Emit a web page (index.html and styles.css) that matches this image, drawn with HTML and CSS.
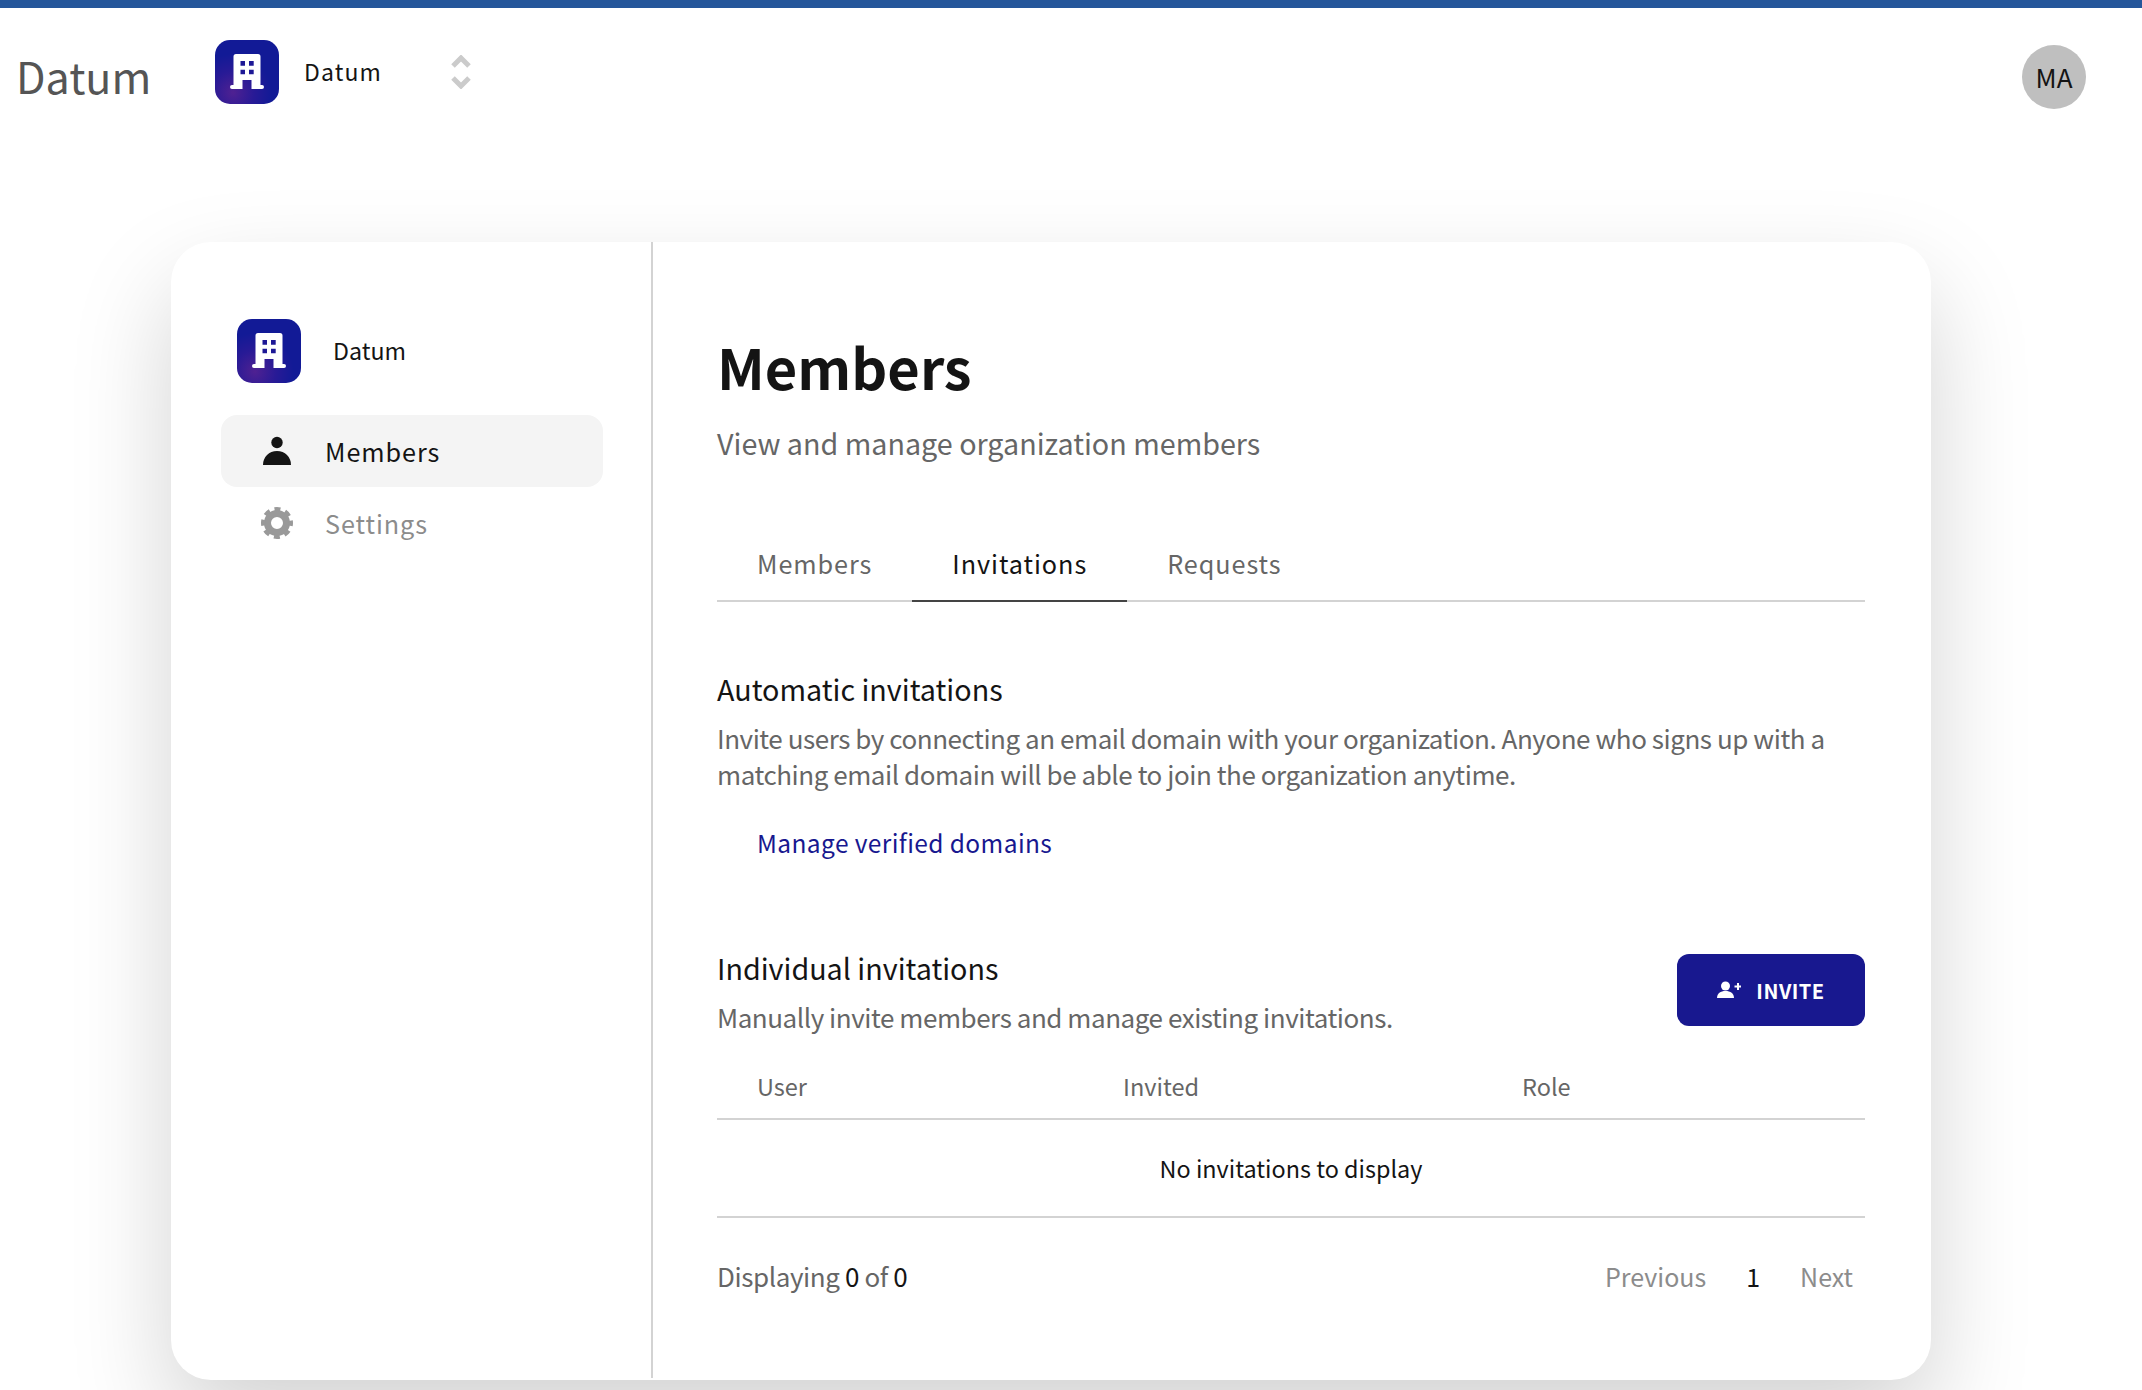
FILE: index.html
```html
<!DOCTYPE html>
<html lang="en">
<head>
    <meta charset="UTF-8">
    <title>Datum - Members</title>
    <link rel="stylesheet" href="styles.css">
</head>
<body>
    <header class="topbar">
        <div class="brand">Datum</div>
        <div class="org-switch">
            <svg class="org-logo" viewBox="0 0 64 64">
                <defs>
                    <radialGradient id="logoGlow" cx="28%" cy="82%" r="60%">
                        <stop offset="0" stop-color="#4f2192"/>
                        <stop offset="0.55" stop-color="#281a96"/>
                        <stop offset="1" stop-color="#121a96"/>
                    </radialGradient>
                </defs>
                <rect width="64" height="64" rx="15" fill="url(#logoGlow)"/>
                <path d="M21 14h22a2.500 2.500 0 0 1 2.500 2.500V45h1.500a2 2 0 0 1 0 4H36.500V40h-9v9H17a2 2 0 0 1 0-4h1.500V16.500A2.500 2.500 0 0 1 21 14z" fill="#fff"/>
                <path d="M25.500 21h4.500v4.700h-4.500zM34 21h4.700v4.700H34zM25.500 29.700h4.500v4.600h-4.500zM34 29.700h4.700v4.600H34z" fill="#1d1896"/>
            </svg>
            <span class="org-name">Datum</span>
            <svg class="chevrons" viewBox="0 0 20 34">
                <path d="M2 11l8-8 8 8M2 23l8 8 8-8" fill="none" stroke="#cbcbcb" stroke-width="5"/>
            </svg>
        </div>
        <div class="avatar">MA</div>
    </header>

    <main class="card">
        <aside class="sidebar">
            <div class="side-org">
                <svg class="org-logo" viewBox="0 0 64 64">
                    <rect width="64" height="64" rx="15" fill="url(#logoGlow)"/>
                    <path d="M21 14h22a2.500 2.500 0 0 1 2.500 2.500V45h1.500a2 2 0 0 1 0 4H36.500V40h-9v9H17a2 2 0 0 1 0-4h1.500V16.500A2.500 2.500 0 0 1 21 14z" fill="#fff"/>
                    <path d="M25.500 21h4.500v4.700h-4.500zM34 21h4.700v4.700H34zM25.500 29.700h4.500v4.600h-4.500zM34 29.700h4.700v4.600H34z" fill="#1d1896"/>
                </svg>
                <span class="side-org-name">Datum</span>
            </div>
            <nav class="side-nav">
                <a class="nav-item active">
                    <svg class="nav-icon" viewBox="0 0 32 32">
                        <circle cx="16" cy="7.500" r="5.700" fill="#141414"/>
                        <path d="M2 30c0-8 6-14 14-14s14 6 14 14z" fill="#141414"/>
                    </svg>
                    Members
                </a>
                <a class="nav-item">
                    <svg class="nav-icon" viewBox="0 0 32 32">
                        <circle cx="16" cy="16" r="9.500" fill="none" stroke="#999" stroke-width="7"/>
                        <circle cx="16" cy="16" r="14" fill="none" stroke="#999" stroke-width="4" stroke-dasharray="6 5" stroke-dashoffset="3"/>
                    </svg>
                    Settings
                </a>
            </nav>
        </aside>

        <section class="content">
            <h1>Members</h1>
            <p class="subtitle">View and manage organization members</p>

            <div class="tabs">
                <a class="tab">Members</a>
                <a class="tab current">Invitations</a>
                <a class="tab">Requests</a>
            </div>

            <h2 class="auto-title">Automatic invitations</h2>
            <p class="desc">Invite users by connecting an email domain with your organization. Anyone who signs up with a matching email domain will be able to join the organization anytime.</p>
            <a class="link">Manage verified domains</a>

            <div class="section-head">
                <div>
                    <h2>Individual invitations</h2>
                    <p class="desc">Manually invite members and manage existing invitations.</p>
                </div>
                <button class="invite-btn">
                    <svg class="invite-icon" viewBox="0 0 24 18">
                        <circle cx="8.500" cy="5" r="4.500" fill="#fff"/>
                        <path d="M0 17c0-4.500 3.500-7 8.500-7s8.500 2.500 8.500 7z" fill="#fff"/>
                        <path d="M17.500 4.500h2.500V2h2v2.500h2v2h-2V9h-2V6.500h-2.500z" fill="#fff"/>
                    </svg>
                    INVITE
                </button>
            </div>

            <div class="table-head">
                <span>User</span>
                <span>Invited</span>
                <span>Role</span>
            </div>
            <div class="table-empty">No invitations to display</div>

            <div class="table-foot">
                <span class="count">Displaying <b>0</b> of <b>0</b></span>
                <div class="pager">
                    <a>Previous</a>
                    <a class="page-num">1</a>
                    <a>Next</a>
                </div>
            </div>
        </section>
    </main>
</body>
</html>
```

FILE: styles.css
```css
:root {
    --navy: #18188f;
    --line: #d3d3d3;
    --text-dark: #141414;
    --text-mid: #666;
    --text-soft: #8c8c8c;
}

html, body {
    margin: 0;
    height: 1390px;
    overflow: hidden;
}

body {
    background: #fff;
    border-top: 8px solid #25569a;
    box-sizing: border-box;
    font-family: "Noto Sans CJK SC", "Noto Sans", sans-serif;
    color: var(--text-dark);
}

/* top bar */
.topbar {
    display: flex;
    align-items: flex-start;
    height: 234px;
    padding: 32px 56px 0 16px;
    box-sizing: border-box;
}

.brand {
    width: 199px;
    font-size: 43px;
    line-height: 64px;
    margin-top: 3px;
    color: #555;
}

.org-switch {
    display: flex;
    align-items: center;
}

.org-logo {
    width: 64px;
    height: 64px;
    flex: none;
}

.org-name {
    width: 147px;
    margin-left: 25px;
    margin-top: -2px;
    font-size: 23px;
    letter-spacing: 1.100px;
}

.chevrons {
    width: 20px;
    height: 34px;
}

.avatar {
    width: 64px;
    height: 64px;
    margin: 5px 0 0 auto;
    border-radius: 50%;
    background: #bfbfbf;
    font-size: 26px;
    line-height: 64px;
    text-align: center;
}

/* card */
.card {
    display: flex;
    width: 1760px;
    height: 1138px;
    margin-left: 171px;
    background: #fff;
    border-radius: 40px;
    box-shadow: 0 45px 100px rgba(0, 0, 0, 0.175);
}

.sidebar {
    width: 480px;
    height: 1136px;
    flex: none;
    border-right: 2px solid var(--line);
    box-sizing: content-box;
}

.side-org {
    display: flex;
    align-items: center;
    padding: 77px 0 0 66px;
}

.side-org-name {
    margin-left: 32px;
    margin-top: -2px;
    font-size: 23.200px;
}

.side-nav {
    margin: 32px 0 0 50px;
    width: 382px;
}

.nav-item {
    display: flex;
    align-items: center;
    height: 72px;
    padding-left: 40px;
    border-radius: 16px;
    font-size: 25.200px;
    letter-spacing: 0.950px;
    color: var(--text-soft);
}

.nav-item.active {
    background: #f4f4f4;
    color: var(--text-dark);
}

.nav-icon {
    width: 32px;
    height: 32px;
    margin-right: 32px;
}

.content {
    flex: 1;
    padding: 86px 66px 0 64px;
}

h1 {
    margin: 0;
    font-size: 56px;
    line-height: 76px;
    font-weight: 700;
}

.subtitle {
    margin: 17px 0 0;
    font-size: 28.700px;
    line-height: 44px;
    color: var(--text-mid);
}

/* tabs */
.tabs {
    display: flex;
    margin-top: 65px;
    border-bottom: 2px solid var(--line);
}

.tab {
    padding: 0 40px;
    height: 70px;
    line-height: 67px;
    margin-bottom: -2px;
    font-size: 25.200px;
    letter-spacing: 0.950px;
    color: var(--text-mid);
}

.tab.current {
    color: var(--text-dark);
    border-bottom: 2px solid #444;
}

h2 {
    margin: 0;
    font-size: 28.700px;
    line-height: 44px;
    font-weight: 400;
    color: var(--text-dark);
}

.auto-title {
    margin-top: 65px;
}

.desc {
    margin: 9px 0 0;
    font-size: 26px;
    letter-spacing: -0.450px;
    line-height: 35.500px;
    color: var(--text-mid);
}

.link {
    display: block;
    margin: 34px 0 0 40px;
    font-size: 24.500px;
    line-height: 36px;
    letter-spacing: 0.400px;
    color: var(--navy);
}

.section-head {
    display: flex;
    justify-content: space-between;
    align-items: flex-start;
    margin-top: 85px;
}

.invite-btn {
    display: flex;
    align-items: center;
    justify-content: center;
    width: 188px;
    height: 72px;
    margin-top: 8px;
    border: none;
    border-radius: 12px;
    background: var(--navy);
    color: #fff;
    font-family: inherit;
    font-size: 20px;
    font-weight: 700;
    letter-spacing: 0.500px;
}

.invite-icon {
    width: 24px;
    height: 18px;
    margin-right: 15px;
}

/* table */
.table-head {
    display: grid;
    grid-template-columns: 366px 399px 1fr;
    padding: 0 0 0 40px;
    margin-top: 20px;
    height: 63px;
    line-height: 62px;
    border-bottom: 2px solid var(--line);
    font-size: 23.500px;
    color: var(--text-mid);
}

.table-empty {
    height: 96px;
    line-height: 96px;
    text-align: center;
    font-size: 23.400px;
    border-bottom: 2px solid var(--line);
}

.table-foot {
    display: flex;
    justify-content: space-between;
    margin-top: 38px;
    font-size: 26px;
    letter-spacing: -0.400px;
    line-height: 40px;
    color: var(--text-mid);
}

.count b {
    font-weight: 400;
    color: var(--text-dark);
}

.pager {
    display: flex;
    gap: 40px;
    padding-right: 12px;
    font-size: 25px;
    letter-spacing: 0;
    color: var(--text-soft);
}

.page-num {
    color: var(--text-dark);
}
```
